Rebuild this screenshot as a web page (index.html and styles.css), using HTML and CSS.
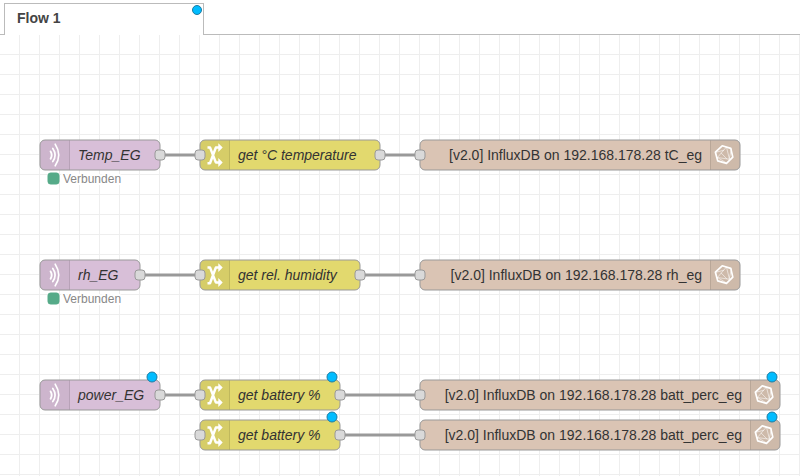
FILE: index.html
```
<!DOCTYPE html>
<html lang="de">
<head>
<meta charset="utf-8">
<title>Flow 1</title>
<link rel="stylesheet" href="styles.css">
</head>
<body>
<header class="tabs">
  <div class="tab">
    <span class="tab-label">Flow 1</span>
    <svg class="tab-changed" width="12" height="12" viewBox="0 0 12 12"><circle class="changed" cx="6" cy="6" r="4.5"/></svg>
  </div>
</header>
<main class="workspace">
<svg class="flow" width="800" height="441" viewBox="0 35 800 441">
  <defs>
    <pattern id="grid" width="20" height="20" x="19" y="14" patternUnits="userSpaceOnUse">
      <path d="M0 0h20v1H1v19H0z" fill="#eee"/>
    </pattern>
    <g id="port"><rect class="port" x="-5" y="-5" width="10" height="10" rx="3"/></g>
    <g id="mqtt" class="stroke-icon">
      <path d="M10.6 11.4Q12.8 15 10.6 18.8" stroke-width="1.9"/>
      <path d="M12.8 8.4Q17.4 15 12.8 21.6" stroke-width="1.7"/>
      <path d="M15.2 4.2Q22.3 15 15.2 25.8" stroke-width="1.6"/>
    </g>
    <g id="change">
      <path d="M7.5 7.4H10L15.8 22.4H19M7.5 23.2H10L15.8 7.6H19" fill="none" stroke="#fff" stroke-width="2.5" stroke-linejoin="round"/>
      <path d="M18.3 3.3L22.7 7.6L18.3 12zM18.3 18L22.7 22.4L18.3 27z" fill="#fff"/>
    </g>
    <g id="influx" class="stroke-icon">
      <path d="M13.2 5.8L21.8 8.4L23.8 17.1L17.5 23.4L8.7 20.9L6.4 12.2z" stroke-width="1.7"/>
      <path d="M17.2 7.3L8.4 17.5L20.1 19.2zM6.8 12.3L14.6 10.3M20.1 19.2L22.4 9M8.4 17.5L17.5 23M12.2 13.1L17.8 18.9" stroke-width=".65" opacity=".85"/>
    </g>
  </defs>
  <rect y="35" width="800" height="441" fill="url(#grid)"/>
  <path class="wire" d="M160 155H200M380 155H420M140 275H200M360 275H420M160 395H200M340 395H420M340 435H420"/>

  <g transform="translate(40 140)">
    <rect class="node mqtt" width="120" height="30" rx="5"/><path class="shade" d="M30 .5H5A4.5 4.5 0 0 0 .5 5V25A4.5 4.5 0 0 0 5 29.5H30z"/><path class="divider" d="M29.5 .5V29.5"/>
    <use href="#mqtt"/><text class="label italic" x="38" y="20">Temp_EG</text><use href="#port" x="120" y="15"/>
    <rect class="status-dot" x="8" y="33" width="11" height="11" rx="2.5"/><text class="status" x="23" y="43">Verbunden</text>
  </g>
  <g transform="translate(200 140)">
    <rect class="node change" width="180" height="30" rx="5"/><path class="shade" d="M30 .5H5A4.5 4.5 0 0 0 .5 5V25A4.5 4.5 0 0 0 5 29.5H30z"/><path class="divider" d="M29.5 .5V29.5"/>
    <use href="#change"/><text class="label italic" x="38" y="20">get °C temperature</text><use href="#port" y="15"/><use href="#port" x="180" y="15"/>
  </g>
  <g transform="translate(420 140)">
    <rect class="node influx" width="320" height="30" rx="5"/><path class="shade" d="M290 .5H315A4.5 4.5 0 0 1 319.5 5V25A4.5 4.5 0 0 1 315 29.5H290z"/><path class="divider" d="M290.5 .5V29.5"/>
    <use href="#influx" x="289"/><text class="label end" x="282" y="20">[v2.0] InfluxDB on 192.168.178.28 tC_eg</text><use href="#port" y="15"/>
  </g>

  <g transform="translate(40 260)">
    <rect class="node mqtt" width="100" height="30" rx="5"/><path class="shade" d="M30 .5H5A4.5 4.5 0 0 0 .5 5V25A4.5 4.5 0 0 0 5 29.5H30z"/><path class="divider" d="M29.5 .5V29.5"/>
    <use href="#mqtt"/><text class="label italic" x="38" y="20">rh_EG</text><use href="#port" x="100" y="15"/>
    <rect class="status-dot" x="8" y="33" width="11" height="11" rx="2.5"/><text class="status" x="23" y="43">Verbunden</text>
  </g>
  <g transform="translate(200 260)">
    <rect class="node change" width="160" height="30" rx="5"/><path class="shade" d="M30 .5H5A4.5 4.5 0 0 0 .5 5V25A4.5 4.5 0 0 0 5 29.5H30z"/><path class="divider" d="M29.5 .5V29.5"/>
    <use href="#change"/><text class="label italic" x="38" y="20">get rel. humidity</text><use href="#port" y="15"/><use href="#port" x="160" y="15"/>
  </g>
  <g transform="translate(420 260)">
    <rect class="node influx" width="320" height="30" rx="5"/><path class="shade" d="M290 .5H315A4.5 4.5 0 0 1 319.5 5V25A4.5 4.5 0 0 1 315 29.5H290z"/><path class="divider" d="M290.5 .5V29.5"/>
    <use href="#influx" x="289"/><text class="label end" x="282" y="20">[v2.0] InfluxDB on 192.168.178.28 rh_eg</text><use href="#port" y="15"/>
  </g>

  <g transform="translate(40 380)">
    <rect class="node mqtt" width="120" height="30" rx="5"/><path class="shade" d="M30 .5H5A4.5 4.5 0 0 0 .5 5V25A4.5 4.5 0 0 0 5 29.5H30z"/><path class="divider" d="M29.5 .5V29.5"/>
    <use href="#mqtt"/><text class="label italic" x="38" y="20">power_EG</text><use href="#port" x="120" y="15"/><circle class="changed" cx="112" cy="-3" r="5"/>
  </g>
  <g transform="translate(200 380)">
    <rect class="node change" width="140" height="30" rx="5"/><path class="shade" d="M30 .5H5A4.5 4.5 0 0 0 .5 5V25A4.5 4.5 0 0 0 5 29.5H30z"/><path class="divider" d="M29.5 .5V29.5"/>
    <use href="#change"/><text class="label italic" x="38" y="20">get battery %</text><use href="#port" y="15"/><use href="#port" x="140" y="15"/><circle class="changed" cx="132" cy="-3" r="5"/>
  </g>
  <g transform="translate(420 380)">
    <rect class="node influx" width="360" height="30" rx="5"/><path class="shade" d="M330 .5H355A4.5 4.5 0 0 1 359.5 5V25A4.5 4.5 0 0 1 355 29.5H330z"/><path class="divider" d="M330.5 .5V29.5"/>
    <use href="#influx" x="329"/><text class="label end" x="322" y="20">[v2.0] InfluxDB on 192.168.178.28 batt_perc_eg</text><use href="#port" y="15"/><circle class="changed" cx="352" cy="-3" r="5"/>
  </g>

  <g transform="translate(200 420)">
    <rect class="node change" width="140" height="30" rx="5"/><path class="shade" d="M30 .5H5A4.5 4.5 0 0 0 .5 5V25A4.5 4.5 0 0 0 5 29.5H30z"/><path class="divider" d="M29.5 .5V29.5"/>
    <use href="#change"/><text class="label italic" x="38" y="20">get battery %</text><use href="#port" y="15"/><use href="#port" x="140" y="15"/><circle class="changed" cx="132" cy="-3" r="5"/>
  </g>
  <g transform="translate(420 420)">
    <rect class="node influx" width="360" height="30" rx="5"/><path class="shade" d="M330 .5H355A4.5 4.5 0 0 1 359.5 5V25A4.5 4.5 0 0 1 355 29.5H330z"/><path class="divider" d="M330.5 .5V29.5"/>
    <use href="#influx" x="329"/><text class="label end" x="322" y="20">[v2.0] InfluxDB on 192.168.178.28 batt_perc_eg</text><use href="#port" y="15"/><circle class="changed" cx="352" cy="-3" r="5"/>
  </g>
</svg>
</main>
</body>
</html>
```
FILE: styles.css
```
* { box-sizing: border-box; }
body {
  margin: 0;
  background: #fff;
  font-family: "Liberation Sans", Arial, sans-serif;
  overflow: hidden;
}
.tabs {
  display: flex;
  height: 35px;
  padding: 3px 0 0 4px;
  box-shadow: inset 0 -1px #bbb;
}
.tab {
  display: flex;
  justify-content: space-between;
  width: 200px;
  height: 32px;
  padding-left: 12px;
  background: #fff;
  border: 1px solid #bbb;
  border-bottom: 0;
}
.tab-label {
  font-size: 14px;
  font-weight: 700;
  line-height: 29px;
  color: #444;
}
.flow { display: block; }
.wire { fill: none; stroke: #999; stroke-width: 3; }
.node { stroke: #999; stroke-width: 1; }
.mqtt { fill: #d8bfd8; }
.change { fill: #e2d96e; }
.influx { fill: #dac4b4; }
.shade { fill: #000; fill-opacity: .05; }
.divider { fill: none; stroke: #000; stroke-opacity: .1; }
.stroke-icon { fill: none; stroke: #fff; stroke-linecap: round; stroke-linejoin: round; }
.port { fill: #d9d9d9; stroke: #999; }
.label { font-size: 14px; fill: #333; }
.italic { font-style: italic; }
.end { text-anchor: end; }
.status-dot { fill: #5a8; stroke: #5a8; }
.status { font-size: 12px; fill: #888; stroke: #fff; stroke-width: 4px; paint-order: stroke; }
.changed { fill: #00bcff; stroke: #1d7ca3; stroke-width: 1; }
```
